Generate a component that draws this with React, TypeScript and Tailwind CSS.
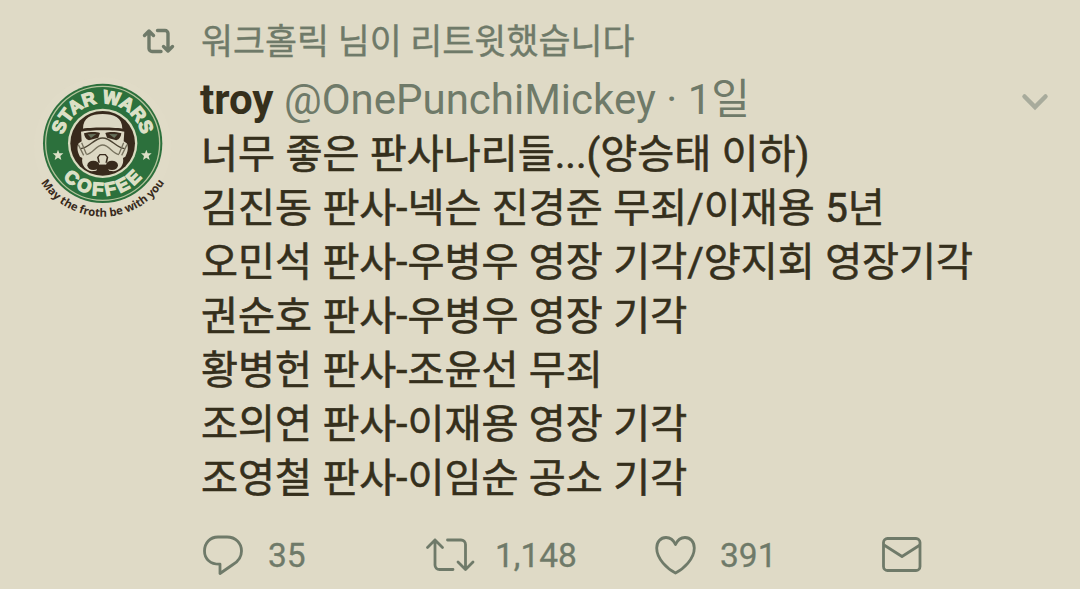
const tweet = {
  retweetedBy: '워크홀릭 님이 리트윗했습니다',
  name: 'troy',
  handle: '@OnePunchiMickey',
  time: '1일',
  lines: [
    '너무 좋은 판사나리들...(양승태 이하)',
    '김진동 판사-넥슨 진경준 무죄/이재용 5년',
    '오민석 판사-우병우 영장 기각/양지회 영장기각',
    '권순호 판사-우병우 영장 기각',
    '황병헌 판사-조윤선 무죄',
    '조의연 판사-이재용 영장 기각',
    '조영철 판사-이임순 공소 기각',
  ],
  replies: '35',
  retweets: '1,148',
  likes: '391',
};

function Avatar() {
  return (
    <svg className="block h-[160px] w-[150px]" viewBox="0 0 450 480">
      <defs>
        <path id="arc-top" d="M113 220a120 120 0 0 1 240 0" />
        <path id="arc-bottom" d="M76 220a157 157 0 0 0 314 0" />
        <path id="arc-motto" d="M14 221a219 219 0 0 0 438 0" />
      </defs>
      <circle cx="233" cy="228" r="206" fill="#e5dfcb" opacity=".3" />
      <circle cx="233" cy="220" r="179" fill="#2c703c" />
      <circle cx="233" cy="220" r="171" fill="none" stroke="#b4c49c" strokeWidth="4" />
      <circle cx="233" cy="220" r="104" fill="#d9dcc0" />
      <circle cx="233" cy="220" r="97" fill="#382a1c" />

      {/* helmet */}
      <path d="M174 176c0-32 24-44 59-44s59 12 59 44l6 8-2 30 9 6c6 10 4 26-4 40l-7 4c4 22-10 36-28 40l-14-2-6-18h-26l-6 18-14 2c-18-4-32-18-28-40l-7-4c-8-14-10-30-4-40l9-6-2-30z" fill="#dcd8c3" />
      <path d="M166 177c30-6 104-6 134 0v8c-30-6-104-6-134 0z" fill="#382a1c" />
      <path d="M177 190c18-5 36-5 48-1l-5 14-28 8c-10-3-14-11-15-21zM289 190c-18-5-36-5-48-1l5 14 28 8c10-3 14-11 15-21z" fill="#382a1c" />
      <path d="M188 193l26-1-16 12zM278 193l-26-1 16 12z" fill="#66705a" />
      <path d="M167 236c26-2 40-32 66-32s40 30 66 32" fill="none" stroke="#4b4332" strokeWidth="4" />
      <path d="M184 254c20-4 30-29 49-29s29 25 49 29" fill="none" stroke="#77725e" strokeWidth="4" />
      <path d="M160 224l16 32M306 224l-16 32M170 218l14 34M296 218l-14 34" stroke="#77725e" strokeWidth="4" />
      <path d="M216 262l8-10h18l8 10-4 16h-26z" fill="#382a1c" />
      <path d="M221 262l5-6h14l5 6-4 18h-16z" fill="#dcd8c3" />
      <path d="M224 284h18l4 8 8 20h-42l8-20z" fill="#382a1c" />
      <ellipse cx="205" cy="286" rx="18" ry="14" fill="#382a1c" />
      <ellipse cx="261" cy="286" rx="18" ry="14" fill="#382a1c" />

      <path d="M99 239l4 11h12l-9 8 3 12-10-7-10 7 3-12-9-8h12zM364 239l4 11h12l-9 8 3 12-10-7-10 7 3-12-9-8h12z" fill="#dce0c6" />
      <g fill="#dce0c6" stroke="#dce0c6" strokeWidth="4" fontFamily="Liberation Sans, sans-serif" fontWeight="700" textAnchor="middle">
        <text fontSize="55"><textPath href="#arc-top" startOffset="50%">STAR WARS</textPath></text>
        <text fontSize="55" letterSpacing="9"><textPath href="#arc-bottom" startOffset="51%">COFFEE</textPath></text>
      </g>
      <text fill="#382a1c" fontSize="34" fontFamily="Open Sans, sans-serif" fontWeight="700" textAnchor="middle">
        <textPath href="#arc-motto" startOffset="50%">May the froth be with you</textPath>
      </text>
    </svg>
  );
}

function ReplyIcon() {
  return (
    <svg className="block h-[42px] w-[42px]" viewBox="0 0 42 42" fill="none" stroke="#6f7a69" strokeWidth="2.8" strokeLinejoin="round">
      <path d="M16 3h9c8.500 0 14.500 6 14.500 14 0 6-3.500 10.500-8.500 13.500L18 39.500v-9.300C8.500 30.500 2.500 25 2.500 17S8 3 16 3z" />
    </svg>
  );
}

function RetweetIcon() {
  return (
    <svg className="block h-[36px] w-[50px]" viewBox="0 0 50 36" fill="none" stroke="#6f7a69" strokeWidth="2.8" strokeLinecap="round" strokeLinejoin="round">
      <path d="M2.500 10.500L10 3l7.500 7.500M10 3v25a4.500 4.500 0 0 0 4.500 4.500h13.500M22.500 3H36a4.500 4.500 0 0 1 4.500 4.500v25M33 25l7.500 7.500L48 25" />
    </svg>
  );
}

function RetweetedIcon() {
  return (
    <svg className="block h-[26px] w-[34px]" viewBox="0 0 34 26" fill="none" stroke="#6f7a69" strokeWidth="3.4" strokeLinecap="round" strokeLinejoin="round">
      <path d="M2.500 7.500l4.500-4.500 4.500 4.500M7 3v17.500a3 3 0 0 0 3 3h9M15.500 2.500H23a3 3 0 0 1 3 3V23M21.500 18.500L26 23l4.500-4.500" />
    </svg>
  );
}

function HeartIcon() {
  return (
    <svg className="block h-[40px] w-[42px]" viewBox="0 0 42 40" fill="none" stroke="#6f7a69" strokeWidth="2.8" strokeLinejoin="round">
      <path d="M21.500 9.500C19.500 5 16 2.500 12 2.500 6.500 2.500 2.700 7 2.700 13c0 11 10.800 21 18.800 25 8-4 18.800-14 18.800-25 0-6-3.800-10.500-9.300-10.500-4 0-7.500 2.500-9.500 7z" />
    </svg>
  );
}

function MailIcon() {
  return (
    <svg className="block h-[36px] w-[40px]" viewBox="0 0 40 36" fill="none" stroke="#6f7a69" strokeWidth="2.8" strokeLinejoin="round">
      <rect x="1.500" y="1.500" width="36.500" height="32" rx="4" />
      <path d="M2 8l18 11.500L38 8" />
    </svg>
  );
}

export default function App() {
  return (
    <main className="h-[589px] w-[1080px] overflow-hidden bg-[#dfdac6] font-['Roboto','Noto_Sans_CJK_KR',sans-serif] text-[#352f1c]">
      <div className="flex h-[70px] items-center pt-3 pl-[142px] text-[#6f7a69]">
        <RetweetedIcon />
        <span className="ml-[25px] pt-0.5 text-[34.8px] leading-[50px] whitespace-nowrap [-webkit-text-stroke:0.4px]">{tweet.retweetedBy}</span>
      </div>

      <div className="flex">
        <div className="w-[200px] shrink-0 pl-[25px]">
          <Avatar />
        </div>
        <div className="flex-1 pt-1">
          <div className="flex h-[54px] items-center justify-between pr-[31px]">
            <div className="pb-0.5 text-[42px] leading-[54px] whitespace-nowrap text-[#6f7a69]">
              <span className="font-bold text-[#352f1c]">{tweet.name}</span> {tweet.handle} · {tweet.time}
            </div>
            <svg className="mt-0.5 block h-[20px] w-[28px]" viewBox="0 0 28 20" fill="none" stroke="#a8ab9c" strokeWidth="4.5" strokeLinecap="round">
              <path d="M3.500 4.500L14 15 24.500 4.500" />
            </svg>
          </div>
          {tweet.lines.map((line) => (
            <p key={line} className="h-[54px] pl-px text-[40.2px] leading-[54px] whitespace-nowrap [word-spacing:0.5px] [-webkit-text-stroke:0.6px]">{line}</p>
          ))}

          <div className="mt-6 flex h-[50px] items-center text-[33.5px] text-[#6f7a69] [-webkit-text-stroke:0.3px]">
            <div className="flex w-[225px] items-center gap-[24px] pl-[2px]">
              <ReplyIcon />
              <span className="pt-[3px]">{tweet.replies}</span>
            </div>
            <div className="flex w-[229px] items-center gap-[20px]">
              <RetweetIcon />
              <span className="pt-[3px]">{tweet.retweets}</span>
            </div>
            <div className="flex w-[228px] items-center gap-[24px]">
              <HeartIcon />
              <span className="pt-[3px]">{tweet.likes}</span>
            </div>
            <MailIcon />
          </div>
        </div>
      </div>
    </main>
  );
}
